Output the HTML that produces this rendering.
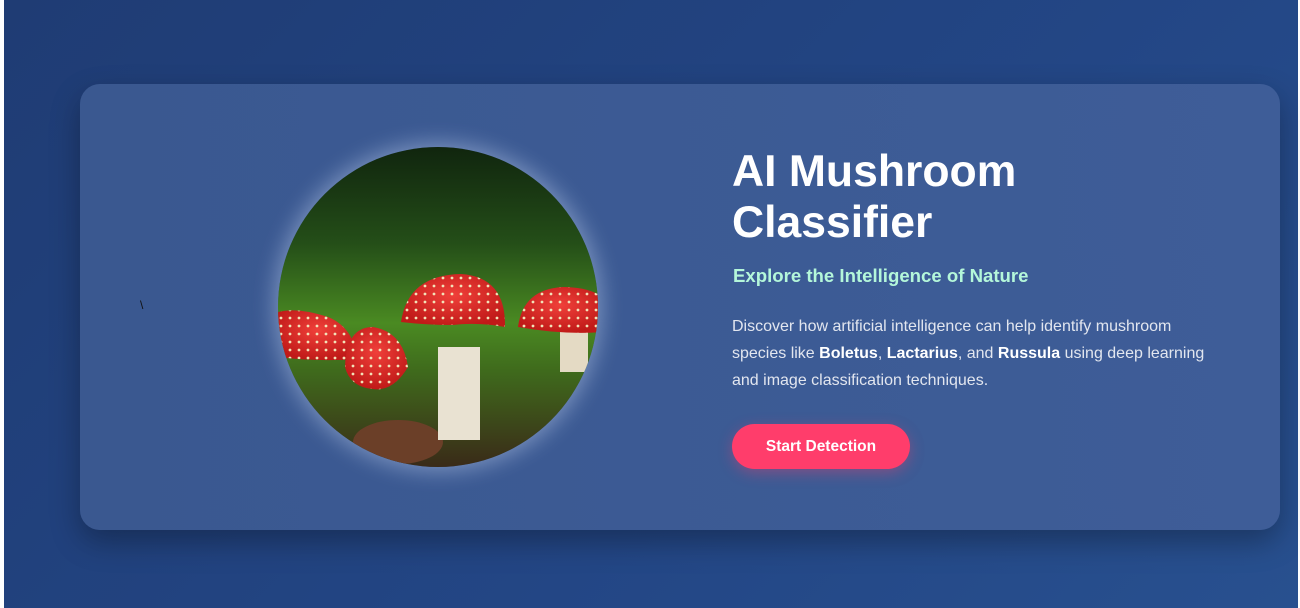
<!DOCTYPE html>
<html><head><meta charset="utf-8"><style>
html,body{margin:0;padding:0;}
body{width:1300px;height:608px;overflow:hidden;background:#fff;font-family:"Liberation Sans",Arial,sans-serif;position:relative;}
.bg{position:absolute;left:4px;top:0;width:1294px;height:608px;background:linear-gradient(135deg,#1f3c74 0%,#234685 60%,#28508f 100%);}
.card{position:absolute;left:80px;top:84px;width:1200px;height:446px;border-radius:20px;background:linear-gradient(90deg,#3a5890,#3e5d98);box-shadow:0 12px 30px rgba(0,0,0,.3);}
.circ{position:absolute;left:278px;top:147px;width:320px;height:320px;border-radius:50%;overflow:hidden;box-shadow:0 0 22px 4px rgba(200,215,245,.45);}
h1{position:absolute;left:732px;top:146px;margin:0;font-size:44.5px;line-height:51px;color:#fff;font-weight:bold;}
.sub{position:absolute;left:733px;top:265px;font-size:18.6px;font-weight:bold;color:#b4f7da;}
.p{position:absolute;left:732px;top:313px;width:500px;font-size:16px;line-height:27px;color:#e2e6ef;white-space:nowrap;}
.p b{color:#fff}
.btn{position:absolute;left:732px;top:424px;width:178px;height:45px;border-radius:23px;background:#ff3d6b;color:#fff;font-size:15.5px;font-weight:bold;text-align:center;line-height:45px;box-shadow:0 4px 14px rgba(255,61,107,.35);}
.bs{position:absolute;left:140px;top:298px;font-size:12px;color:#111;}
</style></head><body>
<div class="bg"></div>
<div class="card"></div>
<div class="bs">\</div>
<div class="circ">
<svg width="320" height="320" viewBox="0 0 320 320">
<defs>
<linearGradient id="g" x1="0" y1="0" x2="0" y2="1"><stop offset="0" stop-color="#10250e"/><stop offset=".3" stop-color="#244e18"/><stop offset=".55" stop-color="#4a8a22"/><stop offset=".7" stop-color="#3f6a1c"/><stop offset="1" stop-color="#3a2a18"/></linearGradient>
<radialGradient id="r" cx=".5" cy=".4" r=".6"><stop offset="0" stop-color="#f0403a"/><stop offset="1" stop-color="#c01a18"/></radialGradient>
<pattern id="d" width="9" height="8" patternUnits="userSpaceOnUse"><circle cx="3" cy="3" r="1.4" fill="#f2e2b8"/></pattern>
</defs>
<rect width="320" height="320" fill="url(#g)"/>
<ellipse cx="120" cy="295" rx="45" ry="22" fill="#6b3f28"/>
<rect x="160" y="200" width="42" height="93" fill="#e9e2d2"/>
<rect x="282" y="180" width="28" height="45" fill="#e4dac4"/>
<path d="M123 175 Q130 128 183 127 Q228 130 227 180 Q200 175 175 178 Q148 178 123 175Z" fill="url(#r)"/>
<path d="M123 175 Q130 128 183 127 Q228 130 227 180 Q200 175 175 178 Q148 178 123 175Z" fill="url(#d)"/>
<path d="M0 165 Q20 160 50 170 Q75 180 80 212 Q40 215 0 210Z" fill="url(#r)"/>
<path d="M0 165 Q20 160 50 170 Q75 180 80 212 Q40 215 0 210Z" fill="url(#d)"/>
<path d="M67 220 Q68 180 95 180 Q125 185 130 220 Q115 245 95 242 Q72 240 67 220Z" fill="url(#r)"/>
<path d="M67 220 Q68 180 95 180 Q125 185 130 220 Q115 245 95 242 Q72 240 67 220Z" fill="url(#d)"/>
<path d="M240 180 Q245 142 285 140 Q310 140 325 150 L325 185 Q285 188 240 180Z" fill="url(#r)"/>
<path d="M240 180 Q245 142 285 140 Q310 140 325 150 L325 185 Q285 188 240 180Z" fill="url(#d)"/>
</svg>
</div>
<h1>AI Mushroom<br>Classifier</h1>
<div class="sub">Explore the Intelligence of Nature</div>
<div class="p">Discover how artificial intelligence can help identify mushroom<br>species like <b>Boletus</b>, <b>Lactarius</b>, and <b>Russula</b> using deep learning<br>and image classification techniques.</div>
<div class="btn">Start Detection</div>
</body></html>
